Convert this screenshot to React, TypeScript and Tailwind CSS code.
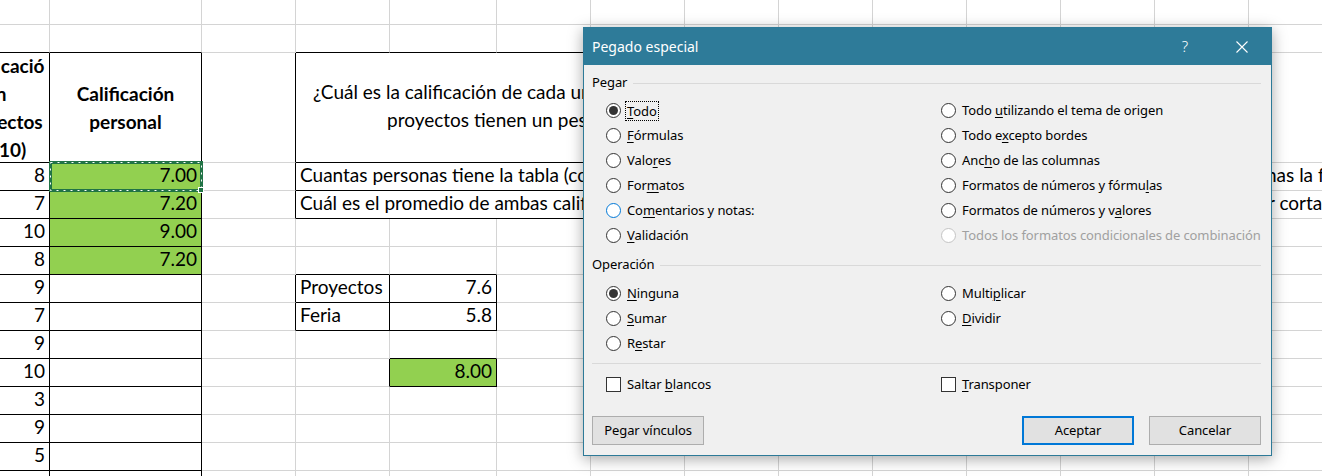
import React from "react";

type Cell = {
  span?: number;
  text?: React.ReactNode;
  align?: "left" | "right" | "center";
  bold?: boolean;
  green?: boolean;
  rb?: boolean;
  bb?: boolean;
  sel?: boolean;
  pad?: string;
};

const COLS = 14;

function line(overrides: { [col: number]: Cell }, merged?: { at: number; cell: Cell }) {
  const out: Cell[] = [];
  for (let i = 0; i < COLS; i++) {
    if (merged && i === merged.at) {
      out.push(merged.cell);
      i += (merged.cell.span ?? 1) - 1;
      continue;
    }
    out.push(overrides[i] ?? {});
  }
  return out;
}

const ab = (a?: string, b?: string, green?: boolean, sel?: boolean) => ({
  0: { text: a, align: "right" as const, rb: true, bb: true },
  1: { text: b, align: "right" as const, rb: true, bb: true, green, sel },
});

const rows: Cell[][] = [
  line({}),
  line({ 0: { bb: true }, 1: { bb: true }, 3: { bb: true }, 4: { bb: true }, 5: { bb: true }, 6: { bb: true }, 7: { bb: true }, 8: { bb: true }, 9: { bb: true }, 10: { bb: true }, 11: { bb: true } }),
  line(
    {
      0: {
        rb: true,
        bb: true,
        bold: true,
        align: "center",
        text: (
          <>
            Calificació
            <br />n
            <br />
            proyectos
            <br />
            (1-10)
          </>
        ),
      },
      1: {
        rb: true,
        bb: true,
        bold: true,
        align: "center",
        text: (
          <>
            Calificación
            <br />
            personal
          </>
        ),
      },
      2: { rb: true },
    },
    {
      at: 3,
      cell: {
        span: 9,
        rb: true,
        bb: true,
        pad: "pb-[4px]",
        text: (
          <div className="flex flex-col leading-[28px]">
            <span className="pl-[17px]">¿Cuál es la calificación de cada uno de los alumnos si la feria y los</span>
            <span className="pl-[91px]">proyectos tienen un peso diferente?</span>
          </div>
        ),
      },
    }
  ),
  line(
    { ...ab("8", "7.00", true, true), 2: { rb: true }, 13: { text: "nas la fórmula", pad: "pl-[17px]" } },
    { at: 3, cell: { span: 9, rb: true, bb: true, text: "Cuantas personas tiene la tabla (contar con fórmula)", pad: "pl-[4px]" } }
  ),
  line(
    { ...ab("7", "7.20", true), 2: { rb: true }, 13: { text: "r corta", pad: "pl-[19px]" } },
    { at: 3, cell: { span: 9, rb: true, bb: true, text: "Cuál es el promedio de ambas calificaciones", pad: "pl-[4px]" } }
  ),
  line({ ...ab("10", "9.00", true) }),
  line({ ...ab("8", "7.20", true), 3: { bb: true }, 4: { bb: true } }),
  line({ ...ab("9"), 2: { rb: true }, 3: { text: "Proyectos", rb: true, bb: true, pad: "pl-[4px]" }, 4: { text: "7.6", align: "right", rb: true, bb: true } }),
  line({ ...ab("7"), 2: { rb: true }, 3: { text: "Feria", rb: true, bb: true, pad: "pl-[4px]" }, 4: { text: "5.8", align: "right", rb: true, bb: true } }),
  line({ ...ab("9"), 4: { bb: true } }),
  line({ ...ab("10"), 3: { rb: true }, 4: { text: "8.00", align: "right", rb: true, bb: true, green: true } }),
  line({ ...ab("3") }),
  line({ ...ab("9") }),
  line({ ...ab("5") }),
  line({ ...ab() }),
];

function SheetCell({ c, header }: { c: Cell; header: boolean }) {
  const span = c.span === 9 ? "col-span-9" : "";
  const justify = c.align === "right" ? "justify-end pr-[4px]" : c.align === "center" ? "justify-center text-center" : "justify-start";
  const vert = header ? "items-center" : "items-end pb-[1px]";
  return (
    <div
      className={`relative flex min-w-0 whitespace-nowrap border-r border-b ${c.rb ? "border-r-black" : "border-r-[#d4d4d4]"} ${
        c.bb ? "border-b-black" : "border-b-[#d4d4d4]"
      } ${c.green ? "bg-[#92d050]" : "bg-white"} ${span} ${justify} ${vert} ${c.pad ?? ""} ${c.bold ? "font-bold leading-[28px]" : ""}`}
    >
      {c.text}
      {c.sel && (
        <>
          <svg className="pointer-events-none absolute -left-[1px] -top-[2px] z-[1]" width="154" height="31">
            <rect x="1.5" y="1.5" width="151" height="28" fill="none" stroke="#217346" strokeWidth="3" />
            <rect x="1.5" y="1.5" width="151" height="28" fill="none" stroke="#ffffff" strokeWidth="1" strokeDasharray="2 5" />
          </svg>
          <div className="absolute -bottom-[3px] -right-[3px] z-[2] h-[6px] w-[6px] border border-white bg-[#217346]" />
        </>
      )}
    </div>
  );
}

function Radio({ on, blue, off }: { on?: boolean; blue?: boolean; off?: boolean }) {
  return (
    <span
      className={`flex h-[15px] w-[15px] shrink-0 items-center justify-center rounded-full border bg-white ${
        blue ? "border-[#0078d7]" : off ? "border-[#c4c4c4]" : "border-[#333333]"
      }`}
    >
      {on && <span className="h-[9px] w-[9px] rounded-full bg-[#333333]" />}
    </span>
  );
}

function Label({ pre, u, post }: { pre?: string; u?: string; post?: string }) {
  return (
    <span className="whitespace-nowrap">
      {pre}
      {u && <span className="underline underline-offset-[2px]">{u}</span>}
      {post}
    </span>
  );
}

type Opt = { pre?: string; u?: string; post?: string; on?: boolean; blue?: boolean; off?: boolean; focus?: boolean } | null;

function OptRow({ o }: { o: Opt }) {
  if (!o) return <div className="h-[25px]" />;
  return (
    <div className={`flex h-[25px] items-center gap-[6px] ${o.off ? "text-[#a0a0a0]" : "text-black"}`}>
      <Radio on={o.on} blue={o.blue} off={o.off} />
      {o.focus ? (
        <span className="-ml-[2px] border border-dotted border-black px-[1px] leading-[18px]">
          <Label pre={o.pre} u={o.u} post={o.post} />
        </span>
      ) : (
        <Label pre={o.pre} u={o.u} post={o.post} />
      )}
    </div>
  );
}

const pegar: [Opt, Opt][] = [
  [{ u: "T", post: "odo", on: true, focus: true }, { pre: "Todo ", u: "u", post: "tilizando el tema de origen" }],
  [{ u: "F", post: "órmulas" }, { pre: "Todo e", u: "x", post: "cepto bordes" }],
  [{ pre: "Valo", u: "r", post: "es" }, { pre: "Anc", u: "h", post: "o de las columnas" }],
  [{ pre: "For", u: "m", post: "atos" }, { pre: "Formatos de números y fórmu", u: "l", post: "as" }],
  [{ pre: "Co", u: "m", post: "entarios y notas:", blue: true }, { pre: "Formatos de números y v", u: "a", post: "lores" }],
  [{ u: "V", post: "alidación" }, { pre: "Todos los formatos condicionales de combinación", off: true }],
];

const operacion: [Opt, Opt][] = [
  [{ u: "N", post: "inguna", on: true }, { pre: "Multi", u: "p", post: "licar" }],
  [{ u: "S", post: "umar" }, { u: "D", post: "ividir" }],
  [{ pre: "R", u: "e", post: "star" }, null],
];

function Legend({ children }: { children: string }) {
  return (
    <div className="flex h-[20px] items-center gap-[6px]">
      <span>{children}</span>
      <div className="h-px flex-1 bg-[#d9d9d9]" />
    </div>
  );
}

function OptGrid({ rows }: { rows: [Opt, Opt][] }) {
  return (
    <div className="ml-[14px] grid grid-cols-[335px_1fr]">
      {rows.map(([a, b], i) => (
        <React.Fragment key={i}>
          <OptRow o={a} />
          <OptRow o={b} />
        </React.Fragment>
      ))}
    </div>
  );
}

export default function App() {
  return (
    <div className="relative h-[476px] w-[1322px] overflow-hidden bg-white font-['Lato',sans-serif] text-[19px] text-black">
      <div className="-ml-[47px] grid grid-cols-[97px_152px_94px_94px_107px_94px_94px_94px_94px_94px_94px_94px_94px_94px] grid-rows-[25px_28px_110px_repeat(12,28px)]">
        {rows.map((r, ri) => r.map((c, ci) => <SheetCell key={`${ri}-${ci}`} c={c} header={ri === 2} />))}
      </div>

      <div className="absolute left-[583px] top-[27px] z-10 flex h-[429px] w-[689px] flex-col border border-[#2d7a98] bg-[#f0f0f0] font-['Noto_Sans',sans-serif] text-[13px] tracking-[-0.1px] text-black shadow-[0_3px_14px_rgba(0,0,0,0.35)]">
        <div className="flex h-[37px] shrink-0 items-center bg-[#2e7b99] pl-[8px] pr-[6px] text-[14px] tracking-normal text-white">
          <span>Pegado especial</span>
          <div className="ml-auto flex items-center">
            <span className="flex w-[46px] justify-center text-[15px] font-light">?</span>
            <span className="ml-[11px] flex w-[46px] justify-center">
              <svg width="12" height="12" viewBox="0 0 12 12">
                <path d="M0.5 0.5 L11.5 11.5 M11.5 0.5 L0.5 11.5" stroke="#ffffff" strokeWidth="1.1" />
              </svg>
            </span>
          </div>
        </div>

        <div className="flex flex-1 flex-col pl-[8px] pr-[10px]">
          <div className="mt-[8px]">
            <Legend>Pegar</Legend>
          </div>
          <div className="mt-[5px]">
            <OptGrid rows={pegar} />
          </div>
          <div className="mt-[7px]">
            <Legend>Operación</Legend>
          </div>
          <div className="mt-[6px]">
            <OptGrid rows={operacion} />
          </div>
          <div className="mt-[7px] h-px bg-[#d9d9d9]" />
          <div className="ml-[14px] mt-[8px] grid grid-cols-[335px_1fr]">
            <div className="flex h-[25px] items-center gap-[6px]">
              <span className="h-[15px] w-[15px] border border-[#333333] bg-white" />
              <Label pre="Saltar " u="b" post="lancos" />
            </div>
            <div className="flex h-[25px] items-center gap-[6px]">
              <span className="h-[15px] w-[15px] border border-[#333333] bg-white" />
              <Label u="T" post="ransponer" />
            </div>
          </div>
          <div className="mt-[19px] flex justify-between">
            <button className="h-[29px] w-[112px] border border-[#adadad] bg-[#e1e1e1]">
              <Label pre="Pe" u="g" post="ar vínculos" />
            </button>
            <div className="flex gap-[15px]">
              <button className="h-[29px] w-[112px] border-2 border-[#0078d7] bg-[#e1e1e1]">Aceptar</button>
              <button className="h-[29px] w-[112px] border border-[#adadad] bg-[#e1e1e1]">Cancelar</button>
            </div>
          </div>
        </div>
      </div>
    </div>
  );
}
